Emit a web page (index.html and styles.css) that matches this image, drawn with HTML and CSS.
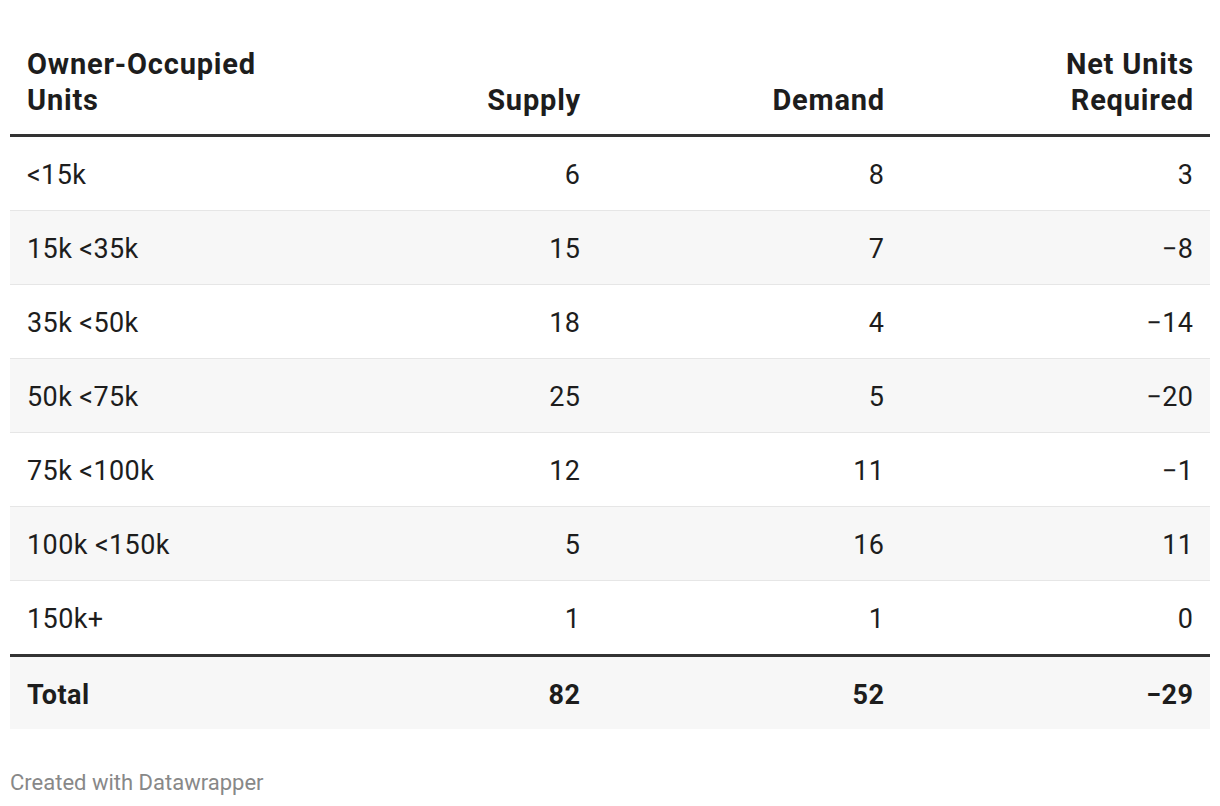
FILE: index.html
```html
<!DOCTYPE html>
<html lang="en">
<head>
<meta charset="utf-8">
<title>Owner-Occupied Units</title>
<link rel="stylesheet" href="styles.css">
</head>
<body>
<div class="chart">
  <table class="dw-table">
    <colgroup>
      <col class="c1"><col class="c2"><col class="c3"><col class="c4">
    </colgroup>
    <thead>
      <tr>
        <th class="left">Owner-Occupied<br>Units</th>
        <th>Supply</th>
        <th>Demand</th>
        <th>Net Units<br>Required</th>
      </tr>
    </thead>
    <tbody>
      <tr><td class="left">&lt;15k</td><td>6</td><td>8</td><td>3</td></tr>
      <tr class="alt"><td class="left">15k &lt;35k</td><td>15</td><td>7</td><td>−8</td></tr>
      <tr><td class="left">35k &lt;50k</td><td>18</td><td>4</td><td>−14</td></tr>
      <tr class="alt"><td class="left">50k &lt;75k</td><td>25</td><td>5</td><td>−20</td></tr>
      <tr><td class="left">75k &lt;100k</td><td>12</td><td>11</td><td>−1</td></tr>
      <tr class="alt"><td class="left">100k &lt;150k</td><td>5</td><td>16</td><td>11</td></tr>
      <tr class="last"><td class="left">150k+</td><td>1</td><td>1</td><td>0</td></tr>
    </tbody>
    <tfoot>
      <tr><td class="left">Total</td><td>82</td><td>52</td><td>−29</td></tr>
    </tfoot>
  </table>
  <div class="footer">Created with Datawrapper</div>
</div>
</body>
</html>
```
FILE: styles.css
```css
html, body {
  margin: 0;
  padding: 0;
  background: #ffffff;
}

body {
  font-family: Roboto, "Liberation Sans", sans-serif;
  color: #1d1d1d;
}

.chart {
  padding: 32px 10px 0 10px;
}

.dw-table {
  width: 1200px;
  border-collapse: collapse;
  table-layout: fixed;
}

.c1 { width: 283px; }
.c2 { width: 304px; }
.c3 { width: 304px; }
.c4 { width: 309px; }

.dw-table th {
  font-weight: 700;
  font-size: 29px;
  letter-spacing: 0.8px;
  line-height: 36px;
  text-align: right;
  vertical-align: bottom;
  padding: 14px 16px 16px 17px;
  border-bottom: 3px solid #333333;
  color: #1d1d1d;
}

.dw-table td {
  font-size: 27px;
  letter-spacing: 0.4px;
  line-height: 33px;
  text-align: right;
  padding: 22px 16.6px 18px 17px;
  border-bottom: 1px solid #e6e6e6;
}

.dw-table .left {
  text-align: left;
}

.dw-table tr.alt td {
  background: #f7f7f7;
}

.dw-table tr.last td {
  border-bottom: none;
}

.dw-table tfoot td {
  font-weight: 700;
  background: #f7f7f7;
  border-top: 3px solid #333333;
  border-bottom: none;
  padding: 22px 16.6px 17px 17px;
}

.footer {
  margin-top: 40px;
  font-size: 22px;
  line-height: 28px;
  color: #888888;
}
```
